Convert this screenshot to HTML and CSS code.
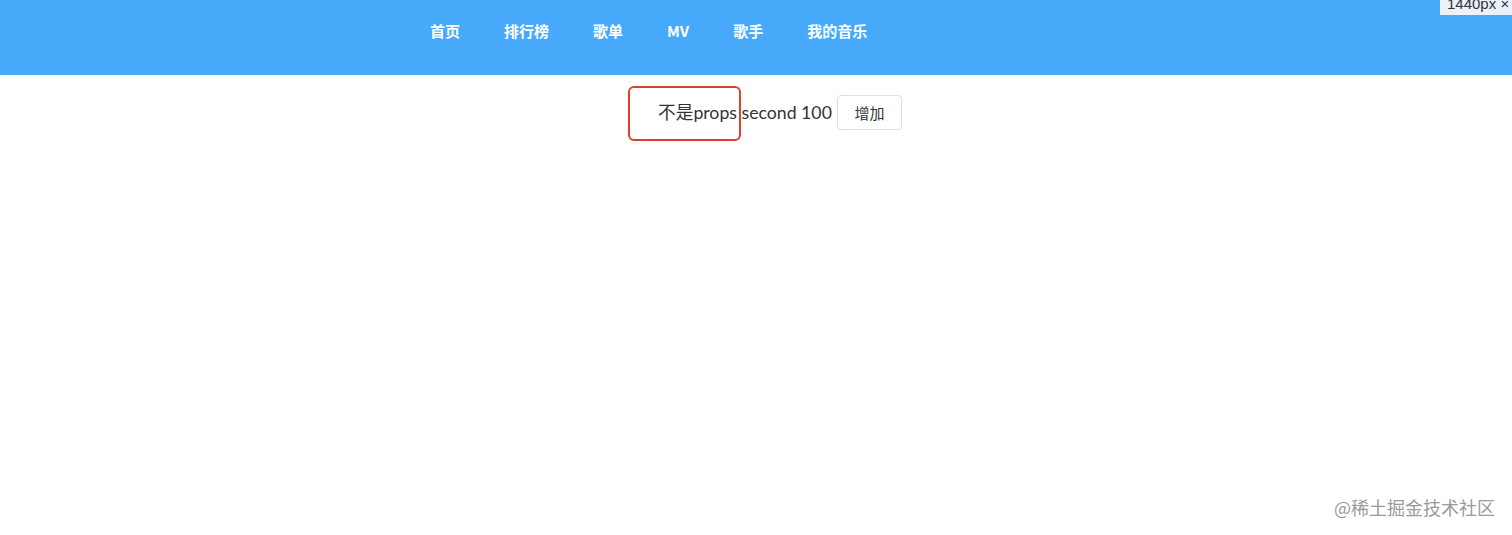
FILE: index.html
```html
<!DOCTYPE html>
<html lang="zh-CN">

<head>
    <meta charset="UTF-8">
    <meta name="viewport" content="width=device-width, initial-scale=1.0">
    <link rel="stylesheet" href="styles.css">
    <title>Music</title>
</head>

<body>
    <div class="header">
        <ul class="nav">
            <li>首页</li>
            <li>排行榜</li>
            <li>歌单</li>
            <li>MV</li>
            <li>歌手</li>
            <li>我的音乐</li>
        </ul>
        <div class="size-badge">1440px ×</div>
    </div>

    <div class="content">
        <div class="line">
            <span class="mark"></span>
            <span class="text">不是props second 100</span>
            <button class="btn" type="button">增加</button>
        </div>
    </div>

    <div class="watermark">@稀土掘金技术社区</div>
</body>

</html>
```

FILE: styles.css
```css
html {
    box-sizing: border-box;
}

*,
*::before,
*::after {
    margin: 0;
    padding: 0;
    box-sizing: inherit;
}

body {
    width: 1512px;
    height: 535px;
    overflow: hidden;
    position: relative;
    background-color: #fff;
    font-family: "Lato", "Noto Sans CJK SC", sans-serif;
    color: #333;
}

.header {
    position: relative;
    height: 75px;
    background-color: #46a9fa;
}

.nav {
    display: flex;
    list-style: none;
    gap: 44px;
    padding-left: 430px;
    padding-top: 19px;
}

.nav li {
    color: #fff;
    font-family: "Noto Sans CJK SC", sans-serif;
    font-size: 15px;
    font-weight: 700;
    line-height: 24px;
}

.size-badge {
    position: absolute;
    top: 0;
    right: 0;
    width: 72px;
    height: 15px;
    padding-left: 7px;
    background-color: #e9f1fa;
    color: #333;
    font-family: "Liberation Sans", sans-serif;
    font-size: 15px;
    line-height: 8px;
    white-space: nowrap;
    overflow: hidden;
}

.content {
    padding-top: 20px;
}

.line {
    position: relative;
    display: flex;
    align-items: center;
    padding-left: 658px;
}

.text {
    font-size: 17.7px;
    line-height: 33px;
    color: #333;
}

.mark {
    position: absolute;
    left: 628px;
    top: -9px;
    width: 113px;
    height: 55px;
    border: 2px solid #e0402b;
    border-radius: 6px;
}

.btn {
    margin-left: 5px;
    width: 65px;
    height: 35px;
    border: 1px solid #dcdfe6;
    border-radius: 4px;
    background-color: #fff;
    color: #333;
    font-family: "Noto Sans CJK SC", sans-serif;
    font-size: 15px;
}

.watermark {
    position: absolute;
    right: 17px;
    bottom: 15px;
    color: #9a9a9a;
    font-family: "Noto Sans CJK SC", sans-serif;
    font-size: 18px;
    line-height: 26px;
}
```
